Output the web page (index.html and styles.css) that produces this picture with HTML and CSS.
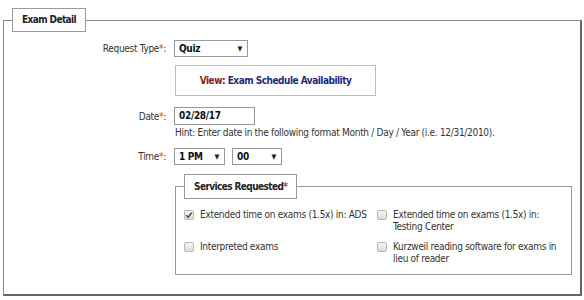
FILE: index.html
```html
<!DOCTYPE html>
<html>

<head>
    <link rel="stylesheet" href="styles.css">
</head>

<body>
    <fieldset class="panel">
        <legend class="panel_title">Exam Detail</legend>
        <div class="row row_type">
            <span class="label">Request Type<span class="req">*</span>:</span>
            <span class="select select_type">Quiz<span class="arrow">&#9660;</span></span>
        </div>
        <div class="row">
            <span class="label"></span>
            <div class="view_box">
                <span class="view">View:</span> <span class="view_link">Exam Schedule Availability</span>
            </div>
        </div>
        <div class="row row_date">
            <span class="label">Date<span class="req">*</span>:</span>
            <span class="input">02/28/17</span>
        </div>
        <div class="row">
            <span class="label"></span>
            <p class="hint">Hint: Enter date in the following format Month / Day / Year (i.e. 12/31/2010).</p>
        </div>
        <div class="row row_time">
            <span class="label">Time<span class="req">*</span>:</span>
            <span class="select select_hour">1 PM<span class="arrow">&#9660;</span></span>
            <span class="select select_min">00<span class="arrow">&#9660;</span></span>
        </div>
        <div class="row">
            <span class="label"></span>
            <fieldset class="services">
                <legend class="services_title">Services Requested<span class="req">*</span></legend>
                <div class="checks">
                    <label class="check_item">
                        <span class="box checked">
                            <svg width="8" height="8" viewBox="0 0 8 8"><path d="M1.2 4.2 L3.2 6.2 L6.8 1.6" fill="none" stroke="#444" stroke-width="1.5"/></svg>
                        </span>
                        <span class="check_text">Extended time on exams (1.5x) in: ADS</span>
                    </label>
                    <label class="check_item">
                        <span class="box"></span>
                        <span class="check_text">Extended time on exams (1.5x) in:<br>Testing Center</span>
                    </label>
                    <label class="check_item">
                        <span class="box"></span>
                        <span class="check_text">Interpreted exams</span>
                    </label>
                    <label class="check_item">
                        <span class="box"></span>
                        <span class="check_text">Kurzweil reading software for exams in<br>lieu of reader</span>
                    </label>
                </div>
            </fieldset>
        </div>
    </fieldset>
</body>

</html>
```

FILE: styles.css
```css
body {
    margin: 8px 2px 4px 3px;
    background-color: white;
    font-family: "DejaVu Sans Condensed", "DejaVu Sans", sans-serif;
    font-size: 10px;
    letter-spacing: -0.3px;
    color: #333;
}

.panel {
    margin: 0;
    border: 1px solid #888;
    border-right: 2px solid #666;
    border-bottom: 2px solid #666;
    padding: 8px 8px 19px 8px;
    min-width: 0;
}

.panel_title {
    border: 1px solid #999;
    background-color: white;
    padding: 0 9px;
    height: 22px;
    line-height: 22px;
    font-weight: bold;
    letter-spacing: -0.6px;
    color: #222;
}

.row {
    display: flex;
    align-items: center;
}

.label {
    width: 154px;
    margin-right: 8px;
    text-align: right;
    flex-shrink: 0;
}

.req {
    color: #c0392b;
}

.select {
    display: flex;
    justify-content: space-between;
    align-items: center;
    box-sizing: border-box;
    height: 17px;
    border: 1px solid #999;
    padding: 0 5px 0 4px;
    font-weight: bold;
    color: #111;
    background-color: white;
}

.arrow {
    font-size: 7px;
    color: #222;
}

.select_type {
    width: 74px;
}

.select_hour {
    width: 51px;
    margin-right: 7px;
}

.select_min {
    width: 50px;
}

.view_box {
    margin: 8px 0 0 1px;
    box-sizing: border-box;
    width: 201px;
    height: 31px;
    line-height: 29px;
    border: 1px solid #bbb;
    text-align: center;
    font-weight: bold;
    letter-spacing: -0.5px;
}

.view {
    color: #8b1a1a;
}

.view_link {
    color: #1f2a7a;
}

.row_date {
    margin-top: 11px;
}

.input {
    box-sizing: border-box;
    width: 81px;
    height: 18px;
    line-height: 16px;
    border: 1px solid #999;
    padding: 0 4px;
    font-weight: bold;
    color: #111;
}

.hint {
    margin: 1px 0 0 1px;
    line-height: 13px;
}

.row_time {
    margin-top: 9px;
}

.services {
    margin: 9px 0 0 1px;
    box-sizing: border-box;
    width: 397px;
    border: 1px solid #999;
    padding: 10px 8px 9px 7px;
    min-width: 0;
}

.services_title {
    margin-left: 1px;
    border: 1px solid #999;
    background-color: white;
    padding: 0 9px;
    height: 23px;
    line-height: 23px;
    font-weight: bold;
    letter-spacing: -0.6px;
    color: #222;
}

.checks {
    display: grid;
    grid-template-columns: 193px auto;
    row-gap: 8px;
}

.check_item {
    display: flex;
    align-items: flex-start;
    line-height: 12px;
    white-space: nowrap;
}

.box {
    display: flex;
    align-items: center;
    justify-content: center;
    box-sizing: border-box;
    width: 10px;
    height: 10px;
    margin: 1px 6px 0 1px;
    border: 1px solid #b8b8b8;
    border-radius: 2px;
    background: linear-gradient(#f4f4f4, #dcdcdc);
    flex-shrink: 0;
}
```
